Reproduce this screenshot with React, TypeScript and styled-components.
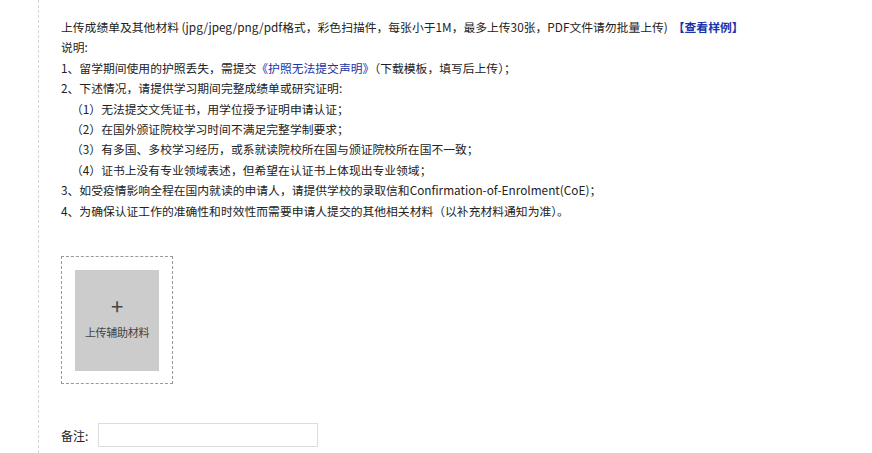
import styled, { createGlobalStyle } from 'styled-components'

const GlobalStyle = createGlobalStyle`
  html, body {
    margin: 0;
    padding: 0;
    background: #fff;
  }
  body {
    font-family: "Noto Sans CJK SC", "Noto Sans", sans-serif;
    color: #222;
  }
`

const Page = styled.div`
  display: flex;
  height: 453px;
  overflow: hidden;
`

const Gutter = styled.div`
  width: 38px;
  flex-shrink: 0;
  border-right: 1px dashed #d6d6d6;
`

const Content = styled.div`
  flex: 1;
  padding: 17px 0 0 22px;
`

const Notes = styled.div`
  font-size: 11.8px;
  line-height: 20.4px;
  color: #222;
  white-space: nowrap;
`

const Line = styled.div<{ $indent?: boolean }>`
  padding-left: ${({ $indent }) => ($indent ? '10px' : '0')};
`

const Link = styled.span`
  color: #1a33a8;
`

const SampleLink = styled.span`
  color: #1a33a8;
  font-weight: bold;
  margin-left: 5px;
`

const UploadFrame = styled.div`
  margin-top: 35px;
  width: 110px;
  height: 126px;
  border: 1px dashed #999;
  display: flex;
  align-items: center;
  justify-content: center;
`

const UploadTile = styled.div`
  width: 84px;
  height: 101px;
  background: #cccccc;
  display: flex;
  flex-direction: column;
  align-items: center;
  justify-content: center;
  color: #444;
  cursor: pointer;
`

const Plus = styled.div`
  font-size: 22px;
  line-height: 20px;
  color: #444;
  margin-top: -6px;
`

const TileLabel = styled.div`
  font-size: 11px;
  line-height: 14px;
  margin-top: 10px;
  letter-spacing: -0.3px;
`

const RemarkRow = styled.div`
  margin-top: 39px;
  display: flex;
  align-items: center;
  gap: 4px;
`

const RemarkLabel = styled.label`
  font-size: 12px;
  color: #222;
  width: 33px;
`

const RemarkInput = styled.input`
  width: 220px;
  height: 24px;
  box-sizing: border-box;
  border: 1px solid #dcdcdc;
  outline: none;
  padding: 0 6px;
  font-size: 12px;
`

const subItems = [
  '（1）无法提交文凭证书，用学位授予证明申请认证；',
  '（2）在国外颁证院校学习时间不满足完整学制要求；',
  '（3）有多国、多校学习经历，或系就读院校所在国与颁证院校所在国不一致；',
  '（4）证书上没有专业领域表述，但希望在认证书上体现出专业领域；',
]

export default function App() {
  return (
    <>
      <GlobalStyle />
      <Page>
        <Gutter />
        <Content>
          <Notes>
            <Line>
              上传成绩单及其他材料 (jpg/jpeg/png/pdf格式，彩色扫描件，每张小于1M，最多上传30张，PDF文件请勿批量上传)
              <SampleLink>【查看样例】</SampleLink>
            </Line>
            <Line>说明:</Line>
            <Line>
              1、留学期间使用的护照丢失，需提交<Link>《护照无法提交声明》</Link>（下载模板，填写后上传）；
            </Line>
            <Line>2、下述情况，请提供学习期间完整成绩单或研究证明:</Line>
            {subItems.map((item) => (
              <Line key={item} $indent>
                {item}
              </Line>
            ))}
            <Line>3、如受疫情影响全程在国内就读的申请人，请提供学校的录取信和Confirmation-of-Enrolment(CoE)；</Line>
            <Line>4、为确保认证工作的准确性和时效性而需要申请人提交的其他相关材料（以补充材料通知为准）。</Line>
          </Notes>
          <UploadFrame>
            <UploadTile>
              <Plus>+</Plus>
              <TileLabel>上传辅助材料</TileLabel>
            </UploadTile>
          </UploadFrame>
          <RemarkRow>
            <RemarkLabel>备注:</RemarkLabel>
            <RemarkInput type="text" />
          </RemarkRow>
        </Content>
      </Page>
    </>
  )
}
